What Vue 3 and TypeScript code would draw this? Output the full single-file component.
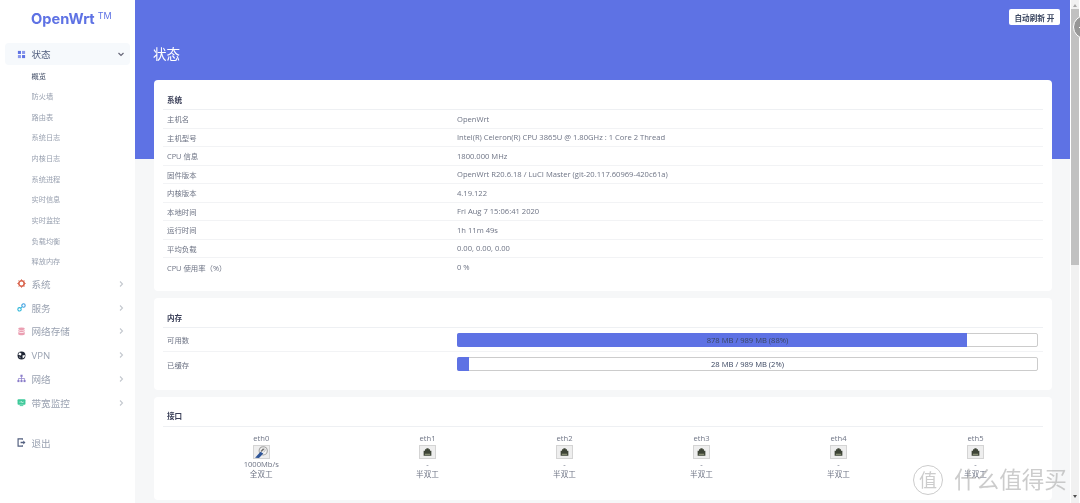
<template>
  <div class="page">
    <aside class="sidebar">
      <div class="brand">OpenWrt<sup>TM</sup></div>
      <nav class="nav">
        <div class="nav-item active">
          <svg class="ico" viewBox="0 0 10 10"><rect x="1" y="1" width="3.4" height="3.4" fill="#5e72e4"/><rect x="5.6" y="1" width="3.4" height="3.4" fill="#8a98ec"/><rect x="1" y="5.6" width="3.4" height="3.4" fill="#8a98ec"/><rect x="5.6" y="5.6" width="3.4" height="3.4" fill="#5e72e4"/></svg>
          <span>状态</span>
          <svg class="chev" viewBox="0 0 8 8"><path d="M1.5 3 L4 5.5 L6.5 3" fill="none" stroke="#667" stroke-width="1.2"/></svg>
        </div>
        <ul class="sub">
          <li v-for="(s, i) in subItems" :key="s" :class="{ current: i === 0 }">{{ s }}</li>
        </ul>
        <div v-for="m in menu" :key="m.label" class="nav-item">
          <svg class="ico" viewBox="0 0 10 10" v-html="m.icon"></svg>
          <span>{{ m.label }}</span>
          <svg class="chev" viewBox="0 0 8 8"><path d="M3 1.5 L5.5 4 L3 6.5" fill="none" stroke="#c4c8cf" stroke-width="1.1"/></svg>
        </div>
        <div class="nav-item logout">
          <svg class="ico" viewBox="0 0 10 10"><path d="M6 2V1H1.2v8H6V8" fill="none" stroke="#525f7f" stroke-width="1.3"/><path d="M4 4.2h3V2.8L9.4 5 7 7.2V5.8H4z" fill="#525f7f"/></svg>
          <span>退出</span>
        </div>
      </nav>
    </aside>

    <main class="main">
      <div class="hero">
        <button class="refresh">自动刷新 开</button>
        <h1>状态</h1>
      </div>
      <div class="content">
        <section class="card system">
          <h3>系统</h3>
          <div v-for="r in sysRows" :key="r[0]" class="row">
            <div class="key">{{ r[0] }}</div>
            <div class="val">{{ r[1] }}</div>
          </div>
        </section>

        <section class="card memory">
          <h3>内存</h3>
          <div v-for="b in memRows" :key="b.label" class="row mem-row">
            <div class="key">{{ b.label }}</div>
            <div class="val">
              <div class="bar">
                <div class="fill" :style="{ width: b.pct + '%' }"></div>
                <span>{{ b.text }}</span>
              </div>
            </div>
          </div>
        </section>

        <section class="card ports">
          <h3>接口</h3>
          <div class="port-list">
            <div v-for="p in ports" :key="p.name" class="port">
              <div>{{ p.name }}</div>
              <div class="port-ico">
                <svg v-if="p.up" viewBox="0 0 17 14">
                  <circle cx="10.5" cy="5.6" r="4.8" fill="#f4f4f4" stroke="#a0a0a0" stroke-width="1.2"/>
                  <path d="M11 2.8 L13.2 4.4 L11 7.4" fill="none" stroke="#b5b5b5" stroke-width="1"/>
                  <path d="M1 13.6 L7.4 6.6 L10.6 8.8 L5.6 14z" fill="#2f5597"/>
                  <path d="M8 6.4 L11 3.4" stroke="#707070" stroke-width="1.8"/>
                </svg>
                <svg v-else viewBox="0 0 17 14">
                  <path d="M4 11.5V5.5h1.6V3.8h1.6V2.6h2.6v1.2h1.6v1.7H13v6z" fill="#3d4436"/>
                  <rect x="5.4" y="9" width="6.2" height="1.4" fill="#8d9478"/>
                </svg>
              </div>
              <div>{{ p.speed }}</div>
              <div>{{ p.duplex }}</div>
            </div>
          </div>
        </section>
      </div>
    </main>

    <div class="scrollbar">
      <div class="arrow up"></div>
      <div class="thumb"></div>
      <div class="arrow down"></div>
    </div>
    <div class="float-ball"><i></i></div>

    <div class="watermark">
      <span class="seal">值</span>
      <span>什么值得买</span>
    </div>
  </div>
</template>

<script setup lang="ts">
const subItems = ['概览', '防火墙', '路由表', '系统日志', '内核日志', '系统进程', '实时信息', '实时监控', '负载均衡', '释放内存']

const menu = [
  { label: '系统', icon: '<circle cx="5" cy="5" r="3" fill="none" stroke="#d9634c" stroke-width="1.8"/><path d="M5 .4v1.4M5 8.2v1.4M.4 5h1.4M8.2 5h1.4M1.8 1.8l1 1M7.2 7.2l1 1M8.2 1.8l-1 1M2.8 7.2l-1 1" stroke="#d9634c" stroke-width="1.1"/>' },
  { label: '服务', icon: '<circle cx="2.8" cy="7" r="1.9" fill="none" stroke="#2bb5d8" stroke-width="1.2"/><circle cx="7.2" cy="2.8" r="1.9" fill="none" stroke="#3f9fe0" stroke-width="1.2"/><path d="M4.2 5.6l1.6-1.5" stroke="#2bb5d8" stroke-width="1.1"/>' },
  { label: '网络存储', icon: '<ellipse cx="5" cy="2" rx="3.6" ry="1.5" fill="#eb9fb2"/><path d="M1.4 3.2c1 1 6.2 1 7.2 0v1.6c-1 1-6.2 1-7.2 0zM1.4 5.6c1 1 6.2 1 7.2 0v2.4c-1 1.4-6.2 1.4-7.2 0z" fill="#eb9fb2"/>' },
  { label: 'VPN', icon: '<circle cx="5" cy="5" r="4.4" fill="#1d2433"/><path d="M3 1.5l2 1.6-.6 1.8-2.4-.4-.6-1zM6 5l2.8-.6-.4 2.4-2 1.6zM2 6.2l1.6.6.2 1.6z" fill="#fff"/>' },
  { label: '网络', icon: '<rect x="3.8" y=".8" width="2.4" height="2.4" fill="#8a7cc9"/><path d="M5 3.2V5M1.6 6.6V5h6.8v1.6M5 5v1.6" fill="none" stroke="#8a7cc9" stroke-width=".8"/><rect x=".5" y="6.6" width="2.2" height="2.4" fill="#8a7cc9"/><rect x="3.9" y="6.6" width="2.2" height="2.4" fill="#8a7cc9"/><rect x="7.3" y="6.6" width="2.2" height="2.4" fill="#8a7cc9"/>' },
  { label: '带宽监控', icon: '<rect x=".6" y="1.4" width="8.8" height="6" rx="1" fill="#3ec99a"/><rect x="3" y="8" width="4" height="1" fill="#3ec99a"/><path d="M2.6 4.6h1.4l.8-1 .8 2 .8-1h1.2" fill="none" stroke="#fff" stroke-width=".6"/>' }
]

const sysRows: [string, string][] = [
  ['主机名', 'OpenWrt'],
  ['主机型号', 'Intel(R) Celeron(R) CPU 3865U @ 1.80GHz : 1 Core 2 Thread'],
  ['CPU 信息', '1800.000 MHz'],
  ['固件版本', 'OpenWrt R20.6.18 / LuCI Master (git-20.117.60969-420c61a)'],
  ['内核版本', '4.19.122'],
  ['本地时间', 'Fri Aug 7 15:06:41 2020'],
  ['运行时间', '1h 11m 49s'],
  ['平均负载', '0.00, 0.00, 0.00'],
  ['CPU 使用率（%）', '0 %']
]

const memRows = [
  { label: '可用数', pct: 88, text: '878 MB / 989 MB (88%)' },
  { label: '已缓存', pct: 2, text: '28 MB / 989 MB (2%)' }
]

const ports = [
  { name: 'eth0', up: true, speed: '1000Mb/s', duplex: '全双工' },
  { name: 'eth1', up: false, speed: '-', duplex: '半双工' },
  { name: 'eth2', up: false, speed: '-', duplex: '半双工' },
  { name: 'eth3', up: false, speed: '-', duplex: '半双工' },
  { name: 'eth4', up: false, speed: '-', duplex: '半双工' },
  { name: 'eth5', up: false, speed: '-', duplex: '半双工' }
]
</script>

<style>
html, body {
  margin: 0;
  height: 100%;
  overflow: hidden;
}
</style>

<style scoped>
.page {
  display: flex;
  position: relative;
  width: 1080px;
  height: 503px;
  overflow: hidden;
  background: #f6f7f8;
  font-family: "Open Sans", "Noto Sans CJK SC", sans-serif;
  font-size: 7.6px;
  color: #6e7485;
  will-change: transform;
}

.sidebar {
  width: 135px;
  flex: none;
  background: #fff;
}

.brand {
  height: 43px;
  padding: 10px 0 0 31px;
  box-sizing: border-box;
  font-family: "Inter", sans-serif;
  font-size: 14.6px;
  font-weight: 700;
  color: #5e72e4;
  line-height: 18px;
}

.brand sup {
  font-size: 9px;
  font-weight: 400;
  margin-left: 3px;
  line-height: 0;
  vertical-align: 5px;
}

.nav {
  padding: 0 5px;
}

.nav-item {
  display: flex;
  align-items: center;
  height: 23.8px;
  padding: 0 5px 0 11.5px;
  font-size: 9.6px;
  color: #9aa2b1;
  border-radius: 4px;
}

.nav-item span {
  flex: 1;
  margin-left: 6px;
}

.nav-item.active {
  height: 22px;
  background: #f6f9fc;
  color: #525f7f;
}

.nav-item.logout {
  margin-top: 16px;
}

.ico {
  width: 9px;
  height: 9px;
  flex: none;
}

.chev {
  width: 8px;
  height: 8px;
  flex: none;
}

.sub {
  list-style: none;
  margin: 0;
  padding: 0.5px 0 0 26.5px;
  font-size: 7.2px;
}

.sub li {
  height: 20.65px;
  line-height: 20.65px;
  color: #9aa2b1;
}

.sub li.current {
  color: #3a4660;
}

.main {
  flex: none;
  width: 935px;
  position: relative;
}

.hero {
  height: 159px;
  background: #5e72e4;
  position: relative;
  padding: 44px 0 0 18px;
  box-sizing: border-box;
}

.hero h1 {
  margin: 0;
  font-size: 13.5px;
  line-height: 20px;
  font-weight: 400;
  color: #fff;
}

.refresh {
  position: absolute;
  top: 9px;
  right: 10px;
  width: 51px;
  height: 16px;
  padding: 0;
  border: 0;
  border-radius: 2px;
  background: #fff;
  color: #3a4660;
  font: inherit;
  font-size: 7.6px;
  font-weight: 600;
}

.content {
  position: relative;
  margin: -79px 18px 0 19px;
  display: flex;
  flex-direction: column;
  gap: 7px;
}

.card {
  background: #fff;
  border-radius: 4px;
  padding: 11px 9px 0;
  box-sizing: border-box;
}

.card h3 {
  margin: 0;
  padding: 0 4px;
  height: 19px;
  line-height: 18px;
  font-size: 7.6px;
  font-weight: 700;
  color: #3a3f58;
  border-bottom: 1px solid #eef0f3;
  box-sizing: border-box;
}

.system { height: 211px; }
.memory { height: 92px; }
.ports { height: 103px; }
.ports h3 { line-height: 16px; }

.row {
  display: flex;
  align-items: center;
  height: 18.5px;
  padding: 0 4px;
  border-bottom: 1px solid #f2f3f5;
  box-sizing: border-box;
}

.row:last-child {
  border-bottom: 0;
}

.key {
  width: 290px;
  flex: none;
  font-size: 7.4px;
}

.val {
  flex: 1;
  min-width: 0;
}

.mem-row {
  height: 24px;
}

.bar {
  position: relative;
  height: 14px;
  margin-right: 1px;
  border: 1px solid #ccc;
  border-radius: 2px;
  box-sizing: border-box;
  text-align: center;
  line-height: 12px;
  color: #3a4660;
}

.fill {
  position: absolute;
  left: -1px;
  top: -1px;
  bottom: -1px;
  min-width: 12px;
  border-radius: 2px 0 0 2px;
  background: #5e72e4;
}

.bar span {
  position: relative;
}

.port-list {
  display: flex;
  padding: 7px 0 0 0.5px;
}

.port {
  width: 137px;
  flex: none;
  text-align: center;
  line-height: 9.8px;
}

.port:first-child {
  width: 195.5px;
}

.port-ico {
  width: 17px;
  height: 14px;
  margin: 1px auto;
  border: 1px solid #d4d4d4;
  background: #eee;
  box-sizing: border-box;
  line-height: 0;
  overflow: hidden;
}

.port-ico svg {
  width: 15px;
  height: 12px;
}

.scrollbar {
  position: absolute;
  top: 0;
  right: 0;
  bottom: 0;
  width: 10px;
  background: #fff;
  display: flex;
  flex-direction: column;
  align-items: center;
}

.scrollbar::before {
  content: "";
  position: absolute;
  top: 0;
  bottom: 0;
  left: 1px;
  width: 8px;
  background: #f1f1f1;
}

.thumb {
  position: relative;
  flex: none;
  width: 8px;
  height: 256px;
  background: #c1c1c1;
}

.arrow {
  position: relative;
  flex: none;
  width: 0;
  height: 0;
  border-left: 2.5px solid transparent;
  border-right: 2.5px solid transparent;
}

.arrow.up {
  margin: 4px 0 2px;
  border-bottom: 3px solid #a8a8a8;
}

.arrow.down {
  margin-top: auto;
  margin-bottom: 5px;
  border-top: 3px solid #505050;
}

.float-ball {
  position: absolute;
  left: 1073px;
  top: 15px;
  width: 24px;
  height: 24px;
  border-radius: 50%;
  background: #979797;
  border: 1px solid #fff;
  box-sizing: border-box;
}

.float-ball i {
  position: absolute;
  left: 5px;
  top: 11px;
  width: 3px;
  height: 1px;
  background: #fff;
}

.watermark {
  position: absolute;
  left: 913px;
  top: 465px;
  display: flex;
  align-items: center;
  gap: 11px;
  font-size: 22.6px;
  color: rgba(170, 170, 170, .6);
  line-height: 26px;
}

.seal {
  width: 30px;
  height: 30px;
  border: 1px solid rgba(170, 170, 170, .6);
  border-radius: 50%;
  box-sizing: border-box;
  font-size: 18px;
  text-align: center;
  line-height: 28px;
}
</style>
